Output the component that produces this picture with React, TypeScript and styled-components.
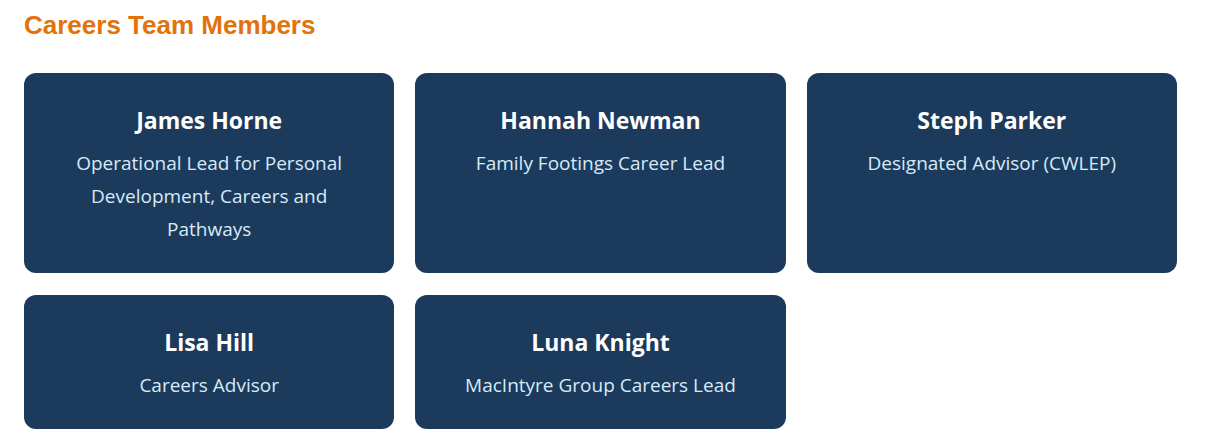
import React from "react";
import styled, { createGlobalStyle } from "styled-components";

const GlobalStyle = createGlobalStyle`
  html, body { margin: 0; padding: 0; background: #ffffff; }
`;

const Page = styled.div`
  padding: 10px 31px 0 24px;
`;

const Heading = styled.h2`
  margin: 0 0 33px;
  font-family: "Liberation Sans", Arial, sans-serif;
  font-weight: 700;
  font-size: 26px;
  line-height: 30px;
  color: #e2720c;
`;

const Grid = styled.div`
  display: grid;
  grid-template-columns: repeat(3, 1fr);
  column-gap: 21px;
  row-gap: 22px;
`;

const Card = styled.div`
  background: #1b3a5c;
  border-radius: 12px;
  padding: 33px 32px 27px;
  text-align: center;
  font-family: "Open Sans", "Noto Sans", sans-serif;
`;

const Name = styled.h3`
  margin: 0 0 13px;
  font-size: 23px;
  line-height: 28px;
  font-weight: 700;
  color: #ffffff;
`;

const Role = styled.p`
  margin: 0;
  font-size: 19px;
  line-height: 33px;
  color: #d6eaf8;
`;

const members = [
  { name: "James Horne", role: "Operational Lead for Personal Development, Careers and Pathways" },
  { name: "Hannah Newman", role: "Family Footings Career Lead" },
  { name: "Steph Parker", role: "Designated Advisor (CWLEP)" },
  { name: "Lisa Hill", role: "Careers Advisor" },
  { name: "Luna Knight", role: "MacIntyre Group Careers Lead" },
];

export default function App() {
  return (
    <>
      <GlobalStyle />
      <Page>
        <Heading>Careers Team Members</Heading>
        <Grid>
          {members.map((m) => (
            <Card key={m.name}>
              <Name>{m.name}</Name>
              <Role>{m.role}</Role>
            </Card>
          ))}
        </Grid>
      </Page>
    </>
  );
}
